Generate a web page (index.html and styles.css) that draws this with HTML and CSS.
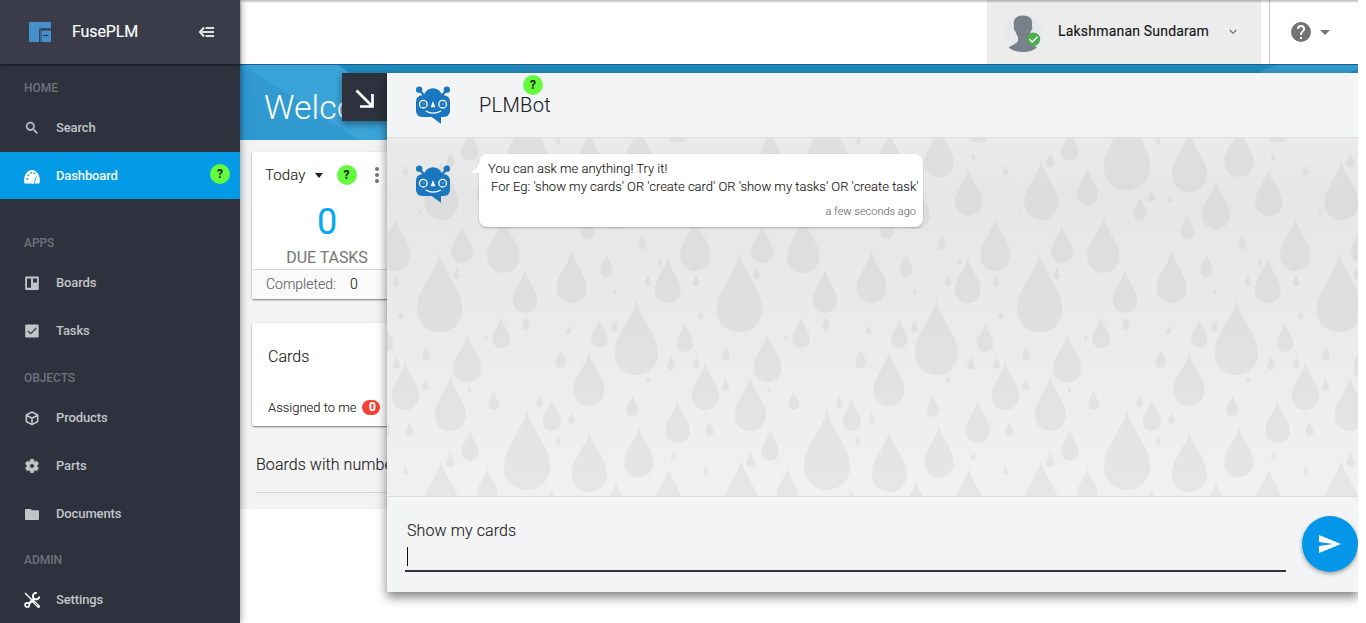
FILE: index.html
```html
<!DOCTYPE html>
<html lang="en">
<head>
<meta charset="utf-8">
<title>FusePLM</title>
<link rel="stylesheet" href="styles.css">
</head>
<body>
<svg class="defs" width="0" height="0">
  <defs>
    <symbol id="bot" viewBox="0 0 102 112">
      <g fill="#1a76bf">
        <circle cx="9.500" cy="10" r="9.500"/><circle cx="92.500" cy="10" r="9.500"/>
        <path d="M9 10L28 31M93 10L74 31" stroke="#1a76bf" stroke-width="7"/>
        <path d="M22 34C24 17 36 6 51 6s27 11 29 28z"/>
        <rect y="27" width="102" height="65" rx="18"/>
        <path d="M44 90l31 22V88z"/>
      </g>
      <g fill="none" stroke="#fff">
        <circle cx="22" cy="53.500" r="11.500" stroke-width="4"/><circle cx="80" cy="53.500" r="11.500" stroke-width="4"/>
        <circle cx="23" cy="52.500" r="3" stroke-width="1.500" stroke-opacity=".45"/><circle cx="81" cy="52.500" r="3" stroke-width="1.500" stroke-opacity=".45"/>
        <path d="M29 74Q51 87 75 74" stroke-width="4"/>
      </g>
      <path d="M51 44l-7 19h14z" fill="#fff"/>
    </symbol>
    <path id="d" d="M0 0C3 24 28.500 46 28.500 71C28.500 88 16 100 0 100S-28.500 88-28.500 71C-28.500 46-3 24 0 0z"/>
    <g id="tile" transform="scale(.33333)">
      <use href="#d" transform="translate(261 835) scale(2.45)"/><use href="#d" transform="translate(448 900) scale(1.86)"/>
      <use href="#d" transform="translate(597 886) scale(1.56)"/><use href="#d" transform="translate(31 738) scale(1.65)"/>
      <use href="#d" transform="translate(90 900) scale(.93)"/><use href="#d" transform="translate(31 965) scale(.47)"/>
      <use href="#d" transform="translate(4 90) scale(1.8)"/><use href="#d" transform="translate(142 114) scale(1.12)"/>
      <use href="#d" transform="translate(299 202) scale(.68)"/><use href="#d" transform="translate(334 179) scale(.37)"/>
      <use href="#d" transform="translate(391 197) scale(.2)"/><use href="#d" transform="translate(441 255) scale(.72)"/>
      <use href="#d" transform="translate(528 151) scale(1.47)"/><use href="#d" transform="translate(686 115) scale(1.43)"/>
      <use href="#d" transform="translate(606 313) scale(.45)"/><use href="#d" transform="translate(66 284) scale(1.15)"/>
      <use href="#d" transform="translate(190 258) scale(1.71)"/><use href="#d" transform="translate(50 412) scale(.36)"/>
      <use href="#d" transform="translate(255 418) scale(1.31)"/><use href="#d" transform="translate(395 360) scale(1.6)"/>
      <use href="#d" transform="translate(499 373) scale(.68)"/><use href="#d" transform="translate(525 474) scale(.2)"/>
      <use href="#d" transform="translate(659 382) scale(.22)"/><use href="#d" transform="translate(683 382) scale(1.38)"/>
      <use href="#d" transform="translate(624 435) scale(.33)"/><use href="#d" transform="translate(766 262) scale(1.61)"/>
      <use href="#d" transform="translate(768 434) scale(.35)"/><use href="#d" transform="translate(782 539) scale(.29)"/>
      <use href="#d" transform="translate(899 367) scale(2.4)"/><use href="#d" transform="translate(840 238) scale(.18)"/>
      <use href="#d" transform="translate(137 609) scale(.2)"/><use href="#d" transform="translate(183 560) scale(.94)"/>
      <use href="#d" transform="translate(258 560) scale(.38)"/><use href="#d" transform="translate(386 585) scale(.29)"/>
      <use href="#d" transform="translate(478 567) scale(.87)"/><use href="#d" transform="translate(523 571) scale(.36)"/>
      <use href="#d" transform="translate(589 507) scale(2.28)"/><use href="#d" transform="translate(735 579) scale(.87)"/>
      <use href="#d" transform="translate(625 738) scale(.21)"/><use href="#d" transform="translate(693 677) scale(.42)"/>
      <use href="#d" transform="translate(769 679) scale(.38)"/><use href="#d" transform="translate(858 651) scale(.42)"/>
      <use href="#d" transform="translate(82 610) scale(1.47)"/><use href="#d" transform="translate(88 767) scale(.19)"/>
      <use href="#d" transform="translate(362 657) scale(.58)"/><use href="#d" transform="translate(447 664) scale(1.64)"/>
      <use href="#d" transform="translate(161 782) scale(.58)"/><use href="#d" transform="translate(298 796) scale(.37)"/>
      <use href="#d" transform="translate(335 807) scale(.96)"/><use href="#d" transform="translate(395 847) scale(.35)"/>
      <use href="#d" transform="translate(578 794) scale(.67)"/><use href="#d" transform="translate(713 809) scale(1.3)"/>
      <use href="#d" transform="translate(796 695) scale(1.45)"/><use href="#d" transform="translate(857 745) scale(.37)"/>
      <use href="#d" transform="translate(808 874) scale(.45)"/><use href="#d" transform="translate(355 918) scale(.28)"/>
      <use href="#d" transform="translate(700 965) scale(.26)"/><use href="#d" transform="translate(797 1004) scale(.31)"/>
    </g>
  </defs>
</svg>
<div class="app">
  <aside class="sidebar">
    <div class="brand">
      <svg class="logo" width="24" height="20" viewBox="0 0 24 20"><path d="M1 0h22v6.500H12.500V20H1z" fill="#4690cb"/><path d="M11.500 7.500V20M11 7h12" stroke="#33475f" fill="none"/><path d="M13.500 8.500H23V20h-9.500z" fill="#4690cb"/><path d="M15 13.500h5.500" stroke="#2c3e58" stroke-width="1.300"/></svg>
      <span class="brand-name">FusePLM</span>
      <svg class="fold" width="18" height="14" viewBox="0 0 18 14" fill="none" stroke="#dfe0e3" stroke-width="2"><path d="M6 2.500L1.900 7 6 11.500M3 7h13M7.500 3H16M7.500 11H16"/></svg>
    </div>
    <nav class="nav">
      <div class="label">HOME</div>
      <a class="item"><svg class="ico" viewBox="0 0 24 24"><path d="M15.500 14h-.8l-.3-.3A6.500 6.500 0 1 0 13.700 14.400l.3.300v.8l5 5 1.500-1.500zm-6 0a4.500 4.500 0 1 1 0-9 4.500 4.500 0 0 1 0 9z" stroke="#c3c4c8" stroke-width=".7"/></svg>Search</a>
      <a class="item active"><svg class="ico" viewBox="0 0 16 16"><path d="M.5 14.500C-1 7 3 1 8 1s9 6 7.500 13.500H10L13 8 8 14.500z" fill="#fff"/><g fill="#039be5"><circle cx="3.300" cy="10" r=".9"/><circle cx="4.200" cy="6.300" r=".9"/><circle cx="7" cy="3.800" r=".9"/><circle cx="10.500" cy="4.200" r=".9"/><path d="M7 15l6-9-3 9z"/></g><path d="M7 14.500L12 7.500 9.500 15z" fill="#fff"/></svg>Dashboard<span class="hint">?</span></a>
      <div class="label apps">APPS</div>
      <a class="item"><svg class="ico" viewBox="0 0 16 16"><path fill-rule="evenodd" d="M2.200 1.500h11.600q1 0 1 1v11.600q0 1-1 1H2.200q-1 0-1-1V2.500q0-1 1-1zm.8 2v9.300h4V3.500zm6 0v4h4v-4z"/></svg>Boards</a>
      <a class="item"><svg class="ico" viewBox="0 0 16 16"><rect x="1.200" y="1.500" width="13.500" height="13" rx="1.200"/><path d="M3.800 8l3 2.700 5.500-5.700" fill="none" stroke="#3a3d49" stroke-width="1.200"/></svg>Tasks</a>
      <div class="label">OBJECTS</div>
      <a class="item"><svg class="ico" viewBox="0 0 16 16" ><path d="M8 2l5.700 3v6.500L8 14.600l-5.700-3.100V5zM2.500 5.200L8 8.300l5.500-3.100M8 8.300v6" fill="none" stroke="#c3c4c8" stroke-width="1.600" stroke-linejoin="round"/></svg>Products</a>
      <a class="item"><svg class="ico" viewBox="0 0 24 24"><path d="M19.430 12.980c.04-.32.070-.64.070-.98s-.03-.66-.07-.98l2.110-1.650a.5.5 0 0 0 .12-.64l-2-3.460a.5.5 0 0 0-.61-.22l-2.490 1a7.300 7.300 0 0 0-1.690-.98l-.38-2.650A.49.490 0 0 0 14 2h-4a.49.490 0 0 0-.49.420l-.38 2.650c-.61.250-1.170.590-1.690.98l-2.490-1a.49.490 0 0 0-.61.220l-2 3.460a.49.490 0 0 0 .12.640l2.110 1.650a7.900 7.900 0 0 0 0 1.960l-2.110 1.650a.5.500 0 0 0-.12.640l2 3.460c.12.220.390.300.61.220l2.490-1c.52.400 1.080.730 1.690.980l.38 2.650c.03.240.24.420.49.420h4c.25 0 .46-.18.490-.42l.38-2.650a7.300 7.300 0 0 0 1.690-.98l2.490 1c.23.090.49 0 .61-.22l2-3.460a.5.500 0 0 0-.12-.64zM12 15.500a3.500 3.500 0 1 1 0-7 3.500 3.500 0 0 1 0 7z" stroke="#c3c4c8"/></svg>Parts</a>
      <a class="item"><svg class="ico" viewBox="0 0 16 16"><path d="M2 3h4.500l1.500 1.300h6q1 0 1 1v7.700q0 1-1 1H2q-1 0-1-1V4q0-1 1-1z"/></svg>Documents</a>
      <div class="label admin">ADMIN</div>
      <a class="item"><svg class="ico" viewBox="0 0 16 16" fill="none" stroke="#fff"><path d="M1 1l7 7" stroke-width="1.400"/><path d="M9 9l5.500 5.500" stroke-width="3" stroke-linecap="round"/><path d="M10.500 10.500l3 3" stroke="#5c6070" stroke-width=".8"/><path d="M10.800 5.800l-5.500 5.500" stroke-width="2.500"/><circle cx="3.200" cy="12.900" r="2.100" fill="#2d323e" stroke-width="1.700"/><path d="M12.800 1a3.200 3.200 0 1 0 2.500 3.500" fill="#2d323e" stroke-width="2"/></svg>Settings</a>
    </nav>
  </aside>
  <main class="main">
    <header class="topbar">
      <div class="user">
        <svg class="avatar" width="40" height="40" viewBox="0 0 40 40"><circle cx="20" cy="20" r="19.500" fill="#e8e9ed"/><path d="M20 1.500c-6 0-9.500 3-9.300 8l.3 3c-1 1 .2 4 1.300 4.500.7 3 1.700 4.500 2.700 6v4c-1 3-6 3.500-9.300 6.500C9 36.500 14 38 20 38s11.500-1.500 14-5c-4-2-8-3-9-6v-4c1.500-2 2.300-3.500 2.700-6 1.200-.5 2.300-3.500 1.300-4.500l.2-3c.2-5-3.200-8-9.200-8z" fill="#788089"/><circle cx="30.500" cy="25.300" r="6.700" fill="#4caf50"/><path d="M26.500 25.300l2.700 2.700 5.300-5.300" fill="none" stroke="#fff" stroke-width="1.400"/></svg>
        <span class="user-name">Lakshmanan Sundaram</span>
        <svg class="chevron" width="8" height="6" viewBox="0 0 8 6"><path d="M.8 1L4 4.300 7.200 1" fill="none" stroke="#666" stroke-width="1.100"/></svg>
      </div>
      <div class="help">
        <svg width="20" height="20" viewBox="2 2 20 20" fill="#737373"><path d="M12 2a10 10 0 1 0 0 20 10 10 0 0 0 0-20zm1 17h-2v-2h2zm2.100-7.800l-.9.900c-.7.800-1.200 1.400-1.200 2.900h-2v-.5c0-1.100.5-2.100 1.200-2.800l1.200-1.300c.4-.3.600-.8.600-1.400a2 2 0 1 0-4 0H8a4 4 0 1 1 8 0c0 .9-.4 1.700-.9 2.200z"/></svg>
        <i class="caret"></i>
      </div>
    </header>
    <section class="banner">
      <svg class="facets" width="1118" height="75"><path d="M3 0L118 75H1118V0z" fill="#3aa3d8"/><path d="M98 0L210 75H1118V0z" fill="#2189be"/><path d="M3 0L118 75H45L0 2z" fill="#319ad1"/><path d="M1018 8l18-8h92l-20 8z" fill="#3399cf"/></svg>
      <h1 class="welcome">Welcome</h1>
    </section>
    <section class="content">
      <div class="card due">
        <div class="due-top"><span>Today</span><i class="caret dark"></i><span class="hint">?</span><svg width="6" height="18" viewBox="0 0 6 18" fill="#757575"><circle cx="3" cy="3" r="2"/><circle cx="3" cy="9" r="2"/><circle cx="3" cy="15" r="2"/></svg></div>
        <div class="due-count">0</div>
        <div class="due-title">DUE TASKS</div>
        <div class="due-foot"><span>Completed:</span><b>0</b></div>
      </div>
      <div class="card cards">
        <div class="cards-title">Cards</div>
        <div class="assigned">Assigned to me <span class="pill">0</span></div>
      </div>
      <div class="boards">Boards with number of cards</div>
    </section>
  </main>
  <button class="collapse"><svg width="20" height="20" viewBox="0 0 20 20" fill="none" stroke="#fff" stroke-width="2.700"><path d="M1.500 1.500L17 17M17.500 5v12.500H5"/></svg></button>
  <section class="chat">
    <header class="chat-head">
      <svg class="bot" width="34" height="38"><use href="#bot"/></svg>
      <h2 class="chat-title">PLMBot<span class="hint">?</span></h2>
    </header>
    <div class="log">
      <svg class="rain" width="971" height="358" fill="#000" fill-opacity=".042">
        <use href="#tile" x="-247" y="-308"/><use href="#tile" x="53" y="-308"/><use href="#tile" x="353" y="-308"/><use href="#tile" x="653" y="-308"/><use href="#tile" x="-547" y="-308"/>
        <use href="#tile" x="-547" y="-8"/><use href="#tile" x="-247" y="-8"/><use href="#tile" x="53" y="-8"/><use href="#tile" x="353" y="-8"/><use href="#tile" x="653" y="-8"/>
        <use href="#tile" x="953" y="-308"/><use href="#tile" x="953" y="-8"/>
        <use href="#tile" x="-247" y="292"/><use href="#tile" x="53" y="292"/><use href="#tile" x="353" y="292"/><use href="#tile" x="653" y="292"/><use href="#tile" x="953" y="292"/>
      </svg>
      <svg class="bot" width="34" height="38"><use href="#bot"/></svg>
      <div class="bubble">
        <p>You can ask me anything! Try it!</p>
        <p class="eg">For Eg: 'show my cards' OR 'create card' OR 'show my tasks' OR 'create task'</p>
        <time>a few seconds ago</time>
      </div>
    </div>
    <footer class="reply">
      <div class="field"><div>Show my cards</div><i class="cursor"></i></div>
      <button class="send"><svg width="22" height="18" viewBox="0 0 22 18"><path d="M0 0l22 9L0 18v-7l14-2L0 7z" fill="#fff"/></svg></button>
    </footer>
  </section>
  <div class="edge"></div>
</div>
</body>
</html>
```
FILE: styles.css
```css
* { box-sizing: border-box; }
body { margin: 0; height: 623px; overflow: hidden; background: #fff; font-family: Roboto, "Liberation Sans", sans-serif; color: #222; }
h1, h2, p { margin: 0; font-weight: inherit; }
button { border: 0; padding: 0; }
.defs { position: absolute; }
.app { position: relative; display: flex; width: 1358px; height: 623px; overflow: hidden; }
.edge { position: absolute; left: 0; right: 0; top: 0; height: 3px; background: linear-gradient(rgba(0,0,0,.28), rgba(0,0,0,.12) 60%, transparent); }
.hint { display: inline-flex; align-items: center; justify-content: center; width: 20px; height: 20px; border-radius: 50%; background: #64fb3e; color: #12260c; font-size: 12px; font-weight: 700; line-height: 20px; }

.sidebar { position: relative; z-index: 1; flex: 0 0 240px; background: #2d323e; box-shadow: 0 0 8px rgba(0,0,0,.45); }
.brand { display: flex; align-items: center; height: 64px; padding: 0 24px 0 28px; background: #3a3d49; box-shadow: 0 1px 2px rgba(0,0,0,.6); }
.brand-name { flex: 1; margin-left: 20px; color: #fff; font-size: 16px; line-height: 20px; letter-spacing: -.1px; -webkit-text-stroke: .15px #fff; margin-bottom: 1px; }
.nav { padding-top: 8px; }
.label { height: 32px; padding-left: 24px; line-height: 32px; font-size: 12px; font-weight: 500; letter-spacing: -.05px; color: #6f727b; }
.item { display: flex; align-items: center; height: 48px; padding: 0 10px 2px 24px; color: #c3c4c8; font-size: 13px; font-weight: 500; letter-spacing: -.12px; }
.item + .label { margin-top: 7px; }
.item + .label.apps { margin-top: 28px; }
.item + .label.admin { margin-top: 6px; }
.item.active { height: 47px; padding-bottom: 0; background: #039be5; color: #f4fbff; }
.item .hint { margin-left: auto; margin-bottom: 3px; }
.ico { width: 16px; height: 16px; margin: 2px 16px 0 0; fill: #c3c4c8; }

.main { flex: 1; min-width: 0; }
.topbar { position: relative; display: flex; justify-content: flex-end; height: 65px; background: #fff; box-shadow: 0 1px 3px rgba(0,0,0,.45); border-bottom: 1px solid #16638c; }
.user { display: flex; align-items: center; width: 274px; padding: 0 24px 2px 16px; background: #ececec; }
.avatar { margin-top: 6px; }
.user-name { flex: 1; margin-left: 15px; font-size: 14px; color: #161616; letter-spacing: .2px; -webkit-text-stroke: .15px #161616; }
.chevron { margin-top: 2px; }
.help { display: flex; align-items: center; gap: 9px; width: 89px; margin-left: 8px; padding-left: 21px; border-left: 1px solid #c9c9c9; }
.caret { width: 0; border: 5px solid transparent; border-top: 5px solid #737373; border-bottom: 0; }
.caret.dark { border-width: 5px 4.500px 0; border-top-color: #222; }
.banner { position: relative; display: flex; height: 75px; padding-left: 24px; background: #2f98cf; box-shadow: inset 0 4px 5px rgba(0,0,0,.12); }
.facets { position: absolute; left: 0; top: 0; }
.welcome { position: relative; margin-top: 20px; font-size: 34px; line-height: 44px; font-weight: 300; color: #fff; }
.content { height: 369px; padding: 12px 12px 0; background: #f3f3f3; font-weight: 300; -webkit-text-stroke-width: .12px; }
.card { width: 150px; background: #fff; border-radius: 2px; box-shadow: 0 1px 2px rgba(0,0,0,.5); }
.due { height: 147px; margin-bottom: 24px; }
.due-top { display: flex; align-items: center; height: 46px; padding-left: 13px; font-size: 15px; letter-spacing: .1px; }
.due-top .caret { margin-left: 9px; }
.due-top .hint { margin: 0 17px 0 14px; letter-spacing: 0; }
.due-count { height: 46px; line-height: 48px; font-size: 36px; font-weight: 400; text-align: center; color: #03a9f4; }
.due-title { height: 25px; line-height: 27px; text-align: center; font-size: 16px; font-weight: 400; letter-spacing: -.05px; color: #7b7b7b; }
.due-foot { display: flex; height: 30px; padding-left: 14px; gap: 14px; border-top: 1px solid #d9d9d9; background: #fafafa; line-height: 29px; font-size: 14px; color: #666; }
.due-foot b { font-weight: 300; color: #222; }
.cards { height: 103px; padding: 23px 16px 0; }
.cards-title { height: 51px; line-height: 22px; font-size: 16px; letter-spacing: .05px; }
.assigned { display: flex; align-items: center; gap: 5px; height: 20px; white-space: nowrap; font-size: 13px; }
.pill { width: 18px; height: 15px; margin-left: 1px; border-radius: 8px; background: #f44336; color: #fff; font-size: 12px; line-height: 15px; text-align: center; font-weight: 700; padding-left: 2px; }
.boards { width: 500px; height: 67px; margin-left: 4px; padding-top: 28px; font-size: 16px; line-height: 22px; letter-spacing: .05px; border-bottom: 1px solid #d4d4d4; }

.collapse { position: absolute; left: 342px; top: 73px; width: 45px; height: 48px; display: flex; align-items: center; justify-content: center; padding-top: 3px; background: #2d323e; box-shadow: 0 3px 7px rgba(0,0,0,.4); }
.chat { position: absolute; left: 387px; top: 73px; width: 971px; height: 519px; display: flex; flex-direction: column; background: #f3f4f6; box-shadow: 0 5px 10px rgba(0,0,0,.5); font-weight: 300; -webkit-text-stroke-width: .12px; }
.chat-head { display: flex; height: 65px; padding-left: 29px; border-bottom: 1px solid #dddee0; }
.chat-head .bot { margin-top: 13px; }
.chat-title { position: relative; margin: 20px 0 0 29px; font-size: 20px; line-height: 25px; letter-spacing: .3px; }
.chat-title .hint { position: absolute; left: 44px; top: -18px; letter-spacing: 0; }
.log { position: relative; display: flex; height: 358px; padding: 16px 0 0 29px; overflow: hidden; background: linear-gradient(#ebebeb, #e6e6e6 16%, #f1f1f1); }
.rain { position: absolute; left: 0; top: 0; }
.log .bot { position: relative; margin-top: 11px; }
.bubble { position: relative; width: 444px; height: 73px; margin-left: 29px; padding: 6px 7px 0 9px; border-radius: 8px; background: #fff; box-shadow: 0 1px 2px rgba(0,0,0,.25); font-size: 13px; line-height: 18px; white-space: nowrap; }
.bubble::before { content: ""; position: absolute; left: -9px; top: 9px; width: 12px; height: 11px; background: #fff; clip-path: path("M12 0H9Q7 7 0 9Q4 10 12 10z"); }
.bubble .eg { padding-left: 3px; }
.bubble time { display: block; margin-top: 7px; text-align: right; font-size: 11px; color: #707070; }
.reply { display: flex; justify-content: space-between; height: 96px; padding: 19px 0 0 18px; border-top: 1px solid #dddee0; }
.field { width: 881px; height: 56px; padding: 4px 0 0 2px; border-bottom: 2px solid #2d323e; font-size: 16px; line-height: 22px; letter-spacing: .1px; }
.cursor { display: block; width: 1px; height: 19px; margin-top: 5px; background: #111; }
.send { width: 56px; height: 56px; border-radius: 50%; display: flex; align-items: center; justify-content: center; background: #0396e9; box-shadow: 0 2px 4px rgba(0,0,0,.35); }
```
